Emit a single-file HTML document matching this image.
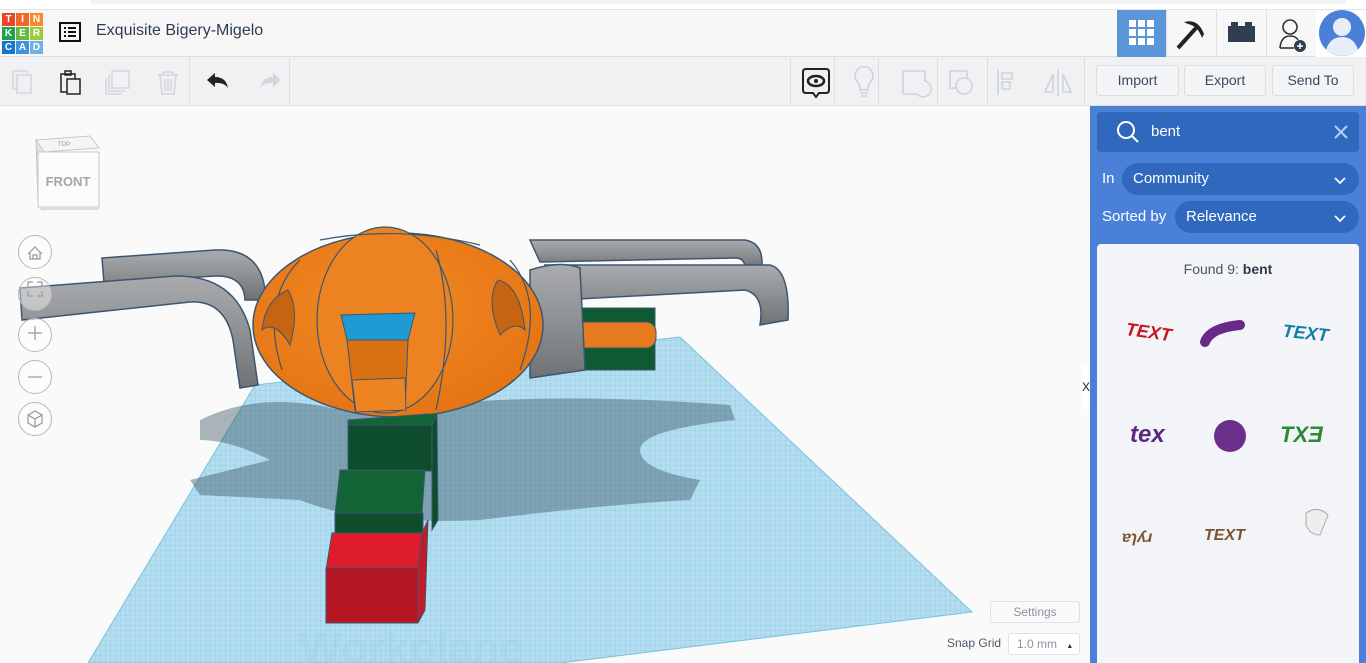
<!DOCTYPE html>
<html><head><meta charset="utf-8"><style>
*{margin:0;padding:0;box-sizing:border-box}
body{width:1366px;height:663px;overflow:hidden;background:#fafafa;font-family:"Liberation Sans",sans-serif;position:relative}
.abs{position:absolute}
.top{left:0;top:0;width:1366px;height:9px;background:#fff}
.top:after{content:"";position:absolute;left:90px;right:20px;top:0;height:4px;background:#f1f2f4;border-radius:0 0 8px 8px}
.hdr{left:0;top:9px;width:1366px;height:48px;background:#f7f7f7;border-top:1px solid #e4e4e4;border-bottom:1px solid #dcdde0}
.tb{left:0;top:57px;width:1366px;height:49px;background:#f0f1f3;border-bottom:1px solid #e0e1e4}
.lg{position:absolute;width:13px;height:13px;color:#fff;font-size:10px;font-weight:bold;text-align:center;line-height:13px}
.btn{position:absolute;top:65px;height:31px;border:1px solid #dcdde0;border-radius:3px;background:#f3f4f6;color:#3a4a5c;font-size:14px;text-align:center;line-height:29px}
.sep{position:absolute;top:58px;width:1px;height:46px;background:#dcdde0}
.panel{left:1090px;top:106px;width:276px;height:557px;background:#4a80d8}
.cell{position:absolute;width:76px;height:92px;background:#f2f4f7;border-radius:4px}
.circ{position:absolute;left:18px;width:34px;height:34px;border:1px solid #b8b8b8;border-radius:50%;background:rgba(255,255,255,.4)}
</style></head><body>
<div class="abs top"></div>
<div class="abs hdr"></div>
<div class="lg" style="left:2px;top:13px;background:#e8452a">T</div><div class="lg" style="left:16px;top:13px;background:#f0682a">I</div><div class="lg" style="left:30px;top:13px;background:#f58b2a">N</div>
<div class="lg" style="left:2px;top:27px;background:#1fa24a">K</div><div class="lg" style="left:16px;top:27px;background:#69b843">E</div><div class="lg" style="left:30px;top:27px;background:#9ccc3c">R</div>
<div class="lg" style="left:2px;top:41px;background:#1677c9">C</div><div class="lg" style="left:16px;top:41px;background:#3e95dc">A</div><div class="lg" style="left:30px;top:41px;background:#6cb2e6">D</div>
<svg class="abs" style="left:59px;top:22px" width="22" height="20"><rect x="1" y="1" width="20" height="18" fill="none" stroke="#111" stroke-width="2"/><g fill="#111"><rect x="5" y="5" width="2" height="2"/><rect x="9" y="5" width="8" height="2"/><rect x="5" y="9" width="2" height="2"/><rect x="9" y="9" width="8" height="2"/><rect x="5" y="13" width="2" height="2"/><rect x="9" y="13" width="8" height="2"/></g></svg>
<div class="abs" style="left:96px;top:22px;font-size:16px;color:#2e3c4d">Exquisite Bigery-Migelo</div>
<div class="abs" style="left:1117px;top:10px;width:49px;height:47px;background:#5b96d9"></div>
<svg class="abs" style="left:1129px;top:20px" width="26" height="26"><g fill="#fff"><rect x="0" y="0" width="7" height="7"/><rect x="9" y="0" width="7" height="7"/><rect x="18" y="0" width="7" height="7"/><rect x="0" y="9" width="7" height="7"/><rect x="9" y="9" width="7" height="7"/><rect x="18" y="9" width="7" height="7"/><rect x="0" y="18" width="7" height="7"/><rect x="9" y="18" width="7" height="7"/><rect x="18" y="18" width="7" height="7"/></g></svg>
<div class="abs" style="left:1166px;top:10px;width:1px;height:47px;background:#e0e0e0"></div>
<svg class="abs" style="left:1174px;top:18px" width="34" height="32"><path d="M4 30 L22 10" stroke="#222" stroke-width="4"/><path d="M10 4 Q24 0 30 16 L28 20 Q24 8 14 6 Z" fill="#222"/></svg>
<div class="abs" style="left:1216px;top:10px;width:1px;height:47px;background:#e0e0e0"></div>
<svg class="abs" style="left:1228px;top:20px" width="28" height="24"><rect x="0" y="6" width="27" height="16" fill="#2f3e50"/><rect x="3" y="2" width="7" height="5" fill="#2f3e50"/><rect x="17" y="2" width="7" height="5" fill="#2f3e50"/></svg>
<div class="abs" style="left:1266px;top:10px;width:1px;height:47px;background:#e0e0e0"></div>
<svg class="abs" style="left:1278px;top:18px" width="34" height="36"><circle cx="12" cy="9" r="7" fill="none" stroke="#333" stroke-width="1.6"/><path d="M2 30 Q3 18 12 18 Q18 18 20 22" fill="none" stroke="#333" stroke-width="1.6"/><line x1="2" y1="30" x2="16" y2="30" stroke="#333" stroke-width="1.6"/><circle cx="22" cy="28" r="6" fill="#2f3e50"/><path d="M22 25v6M19 28h6" stroke="#fff" stroke-width="1.5"/></svg>
<div class="abs" style="left:1316px;top:10px;width:50px;height:47px;background:#fff"></div>
<svg class="abs" style="left:1318px;top:10px" width="48" height="46"><circle cx="24" cy="23" r="23" fill="#4a80d8"/><circle cx="24" cy="17" r="9" fill="#e8eef8"/><path d="M8 40 Q12 27 24 27 Q36 27 40 40 Q32 46 24 46 Q16 46 8 40Z" fill="#e8eef8"/></svg>
<div class="abs tb"></div>
<svg class="abs" style="left:10px;top:68px" width="180" height="28" fill="none" stroke-width="1.5">
<rect x="3" y="3" width="14" height="18" stroke="#d3d6db"/><rect x="7" y="7" width="14" height="18" stroke="#d3d6db" fill="#f0f1f3"/>
<rect x="51" y="6" width="14" height="18" stroke="#222"/><rect x="57" y="11" width="13" height="15" stroke="#222" fill="#f0f1f3"/><rect x="55" y="3" width="6" height="4" stroke="#222"/>
<rect x="102" y="3" width="17" height="17" stroke="#d3d6db"/><path d="M99 7v16h16M96 10v16h16" stroke="#d3d6db"/>
<path d="M148 7h20M153 7v-3h10v3M150 7l2 19h12l2-19M155 11v12M158 11v12M161 11v12" stroke="#d3d6db"/>
</svg>
<div class="sep" style="left:189px"></div>
<svg class="abs" style="left:204px;top:70px" width="80" height="22"><path d="M3 10 L11 3 V7 Q22 7 24 18 Q20 12 11 13 V17 Z" fill="#222"/><path d="M77 10 L69 3 V7 Q58 7 56 18 Q60 12 69 13 V17 Z" fill="#d3d6db"/></svg>
<div class="sep" style="left:289px"></div>
<div class="sep" style="left:790px"></div>
<svg class="abs" style="left:801px;top:67px" width="30" height="34"><path d="M5 2h20q3 0 3 3v18q0 3-3 3h-7l-3 4-3-4H5q-3 0-3-3V5q0-3 3-3z" fill="none" stroke="#222" stroke-width="2"/><ellipse cx="15" cy="14" rx="8" ry="5" fill="none" stroke="#222" stroke-width="2.5"/><circle cx="15" cy="14" r="2" fill="#222"/></svg>
<div class="sep" style="left:834px"></div>
<svg class="abs" style="left:848px;top:66px" width="230" height="32" fill="none" stroke="#d0d4da" stroke-width="1.6">
<path d="M12 24 Q12 18 8 14 A9 9 0 1 1 24 14 Q20 18 20 24 Z M12 27h8M13 30h6"/>
<path d="M55 5h22v10 a8 8 0 1 1 -8 13 H55Z"/>
<rect x="102" y="5" width="17" height="17"/><circle cx="116" cy="20" r="8" fill="#f0f1f3"/>
<path d="M150 3v26M154 7h10v6h-10zM154 16h8v7h-8z"/>
<path d="M210 3v27M205 8l-8 18h8zM215 8l8 18h-8z"/>
</svg>
<div class="sep" style="left:878px"></div><div class="sep" style="left:937px"></div><div class="sep" style="left:987px"></div><div class="sep" style="left:1084px"></div>
<div class="btn" style="left:1096px;width:83px">Import</div>
<div class="btn" style="left:1184px;width:82px">Export</div>
<div class="btn" style="left:1272px;width:82px">Send To</div>

<svg class="abs" style="left:0;top:106px" width="1090" height="557" viewBox="0 106 1090 557">
<defs>
<pattern id="g" width="5" height="5" patternUnits="userSpaceOnUse"><rect width="5" height="5" fill="#b4def0"/><path d="M0 0H5M0 0V5" stroke="#7fc3e0" stroke-width=".6"/></pattern>
<linearGradient id="pp" x1="0" y1="0" x2="0" y2="1"><stop offset="0" stop-color="#a9abae"/><stop offset=".5" stop-color="#8e9194"/><stop offset="1" stop-color="#6f7275"/></linearGradient>
<radialGradient id="pk" cx=".45" cy=".4" r=".6"><stop offset="0" stop-color="#f28a25"/><stop offset="1" stop-color="#e57514"/></radialGradient>
</defs>
<polygon points="255,385 680,337 972,612 560,663 88,663 180,510" fill="url(#g)" stroke="#7cc0dd"/>
<path d="M200 420 Q260 390 340 410 L500 400 Q600 395 730 405 L735 420 Q640 430 640 450 Q640 470 700 480 L690 500 Q600 505 480 520 Q360 525 300 500 L200 495 L190 480 L270 460 Q230 440 200 440Z" fill="#2f4a58" opacity=".4"/>
<path d="M102 258 L215 250 Q260 248 265 290 L265 300 L245 300 Q244 275 215 276 L104 283 Z" fill="url(#pp)" stroke="#3c5670" stroke-width="1.5"/>
<path d="M20 288 L175 276 Q235 275 250 330 L258 385 L240 388 L233 340 Q225 300 190 302 L22 320 Z" fill="url(#pp)" stroke="#3c5670" stroke-width="1.5"/>
<path d="M530 240 L745 240 Q763 243 762 265 L745 268 Q745 258 735 258 L540 262Z" fill="url(#pp)" stroke="#3c5670" stroke-width="1.5"/>
<path d="M545 265 L770 265 Q790 270 788 320 L760 325 Q765 295 745 290 L560 300Z" fill="url(#pp)" stroke="#3c5670" stroke-width="1.5"/>
<rect x="550" y="308" width="105" height="62" fill="#0f5a32" stroke="#3c5670"/>
<rect x="548" y="322" width="108" height="26" rx="10" fill="#e57a1e" stroke="#3c5670"/>
<path d="M530 270 Q560 260 580 268 L585 370 L530 378Z" fill="url(#pp)" stroke="#3c5670" stroke-width="1.5"/>
<ellipse cx="398" cy="325" rx="145" ry="92" fill="url(#pk)" stroke="#3c5670" stroke-width="1.5"/>
<ellipse cx="385" cy="320" rx="68" ry="93" fill="#ed8220" stroke="#3c5670" stroke-width="1.2"/>
<path d="M320 240 Q398 225 480 245 M300 260 Q260 300 282 370 M510 260 Q545 300 520 370 M436 250 Q456 320 436 410" fill="none" stroke="#3c5670" stroke-width="1.2"/>
<path d="M288 290 Q265 300 262 330 Q275 320 290 345 Q300 310 288 290Z" fill="#c76412" stroke="#3c5670"/>
<path d="M498 280 Q520 285 525 330 Q515 320 500 335 Q485 300 498 280Z" fill="#c76412" stroke="#3c5670"/>
<path d="M341 315 L415 313 L408 340 L347 340Z" fill="#1e9ad4" stroke="#3c5670"/>
<path d="M347 340 L408 340 L405 410 L355 410Z" fill="#d77113" stroke="#3c5670"/>
<path d="M352 380 L405 378 L406 410 L356 412Z" fill="#ee8420" stroke="#3c5670"/>
<rect x="348" y="425" width="84" height="46" fill="#0e4d2c" stroke="#3c5670"/>
<polygon points="348,420 428,414 437,414 432,425 348,425" fill="#126436" stroke="#3c5670"/>
<polygon points="432,425 437,414 438,520 432,530" fill="#0e4d2c" stroke="#3c5670"/>
<polygon points="340,470 425,470 422,513 335,515" fill="#126436" stroke="#3c5670"/>
<rect x="335" y="513" width="88" height="24" fill="#0e4d2c" stroke="#3c5670"/>
<polygon points="326,570 332,533 422,533 418,568" fill="#de1c2c" stroke="#3c5670"/>
<rect x="326" y="568" width="92" height="55" fill="#b51624" stroke="#3c5670"/>
<polygon points="418,568 422,533 428,520 425,610 418,623" fill="#c41a28" stroke="#3c5670"/>
<text x="300" y="663" font-size="44" font-weight="bold" fill="#9fcfe3" opacity=".35">Workplane</text>
</svg>
<svg class="abs" style="left:32px;top:132px" width="70" height="82"><polygon points="4,8 58,4 67,16 12,20" fill="#f4f4f4" stroke="#c8c8c8"/><polygon points="4,8 12,20 12,78 6,70" fill="#e4e4e4" stroke="#c8c8c8"/><rect x="6" y="20" width="61" height="55" fill="#fbfbfb" stroke="#c8c8c8"/><rect x="8" y="75" width="59" height="3" fill="#ddd"/><text x="36" y="54" font-size="13" font-weight="bold" fill="#a3a6aa" text-anchor="middle">FRONT</text><text x="32" y="14" font-size="6" fill="#999" text-anchor="middle">TOP</text></svg>
<div class="circ" style="top:235px"></div><div class="circ" style="top:277px"></div><div class="circ" style="top:318px"></div><div class="circ" style="top:360px"></div><div class="circ" style="top:402px"></div>
<svg class="abs" style="left:18px;top:235px" width="34" height="200" fill="none" stroke="#999" stroke-width="1.2"><path d="M10 19l7-7 7 7M12 17v7h10v-7M15 24v-4h4v4"/><path d="M10 52v-5h5M19 47h5v5M24 56v5h-5M15 61h-5v-5"/><path d="M17 91v14M10 98h14"/><path d="M10 142h14"/><path d="M17 176l7 4v8l-7 4-7-4v-8zM10 180l7 4 7-4M17 184v8"/></svg>
<div class="abs" style="left:990px;top:601px;width:90px;height:22px;border:1px solid #e0e0e4;border-radius:3px;background:#fafafa;color:#8a94a0;font-size:12px;text-align:center;line-height:20px">Settings</div>
<div class="abs" style="left:947px;top:636px;font-size:12px;color:#4a5868">Snap Grid</div>
<div class="abs" style="left:1008px;top:633px;width:72px;height:22px;border:1px solid #e0e0e4;border-radius:3px;background:#fff;color:#8a94a0;font-size:12px;line-height:20px;padding-left:8px">1.0 mm <span style="font-size:7px;color:#333;margin-left:6px">▲</span></div>
<div class="abs" style="left:1082px;top:365px;width:8px;height:44px;background:#fff;border-radius:4px 0 0 4px;font-size:12px;line-height:44px;color:#222">X</div>
<div class="abs panel"></div>
<div class="abs" style="left:1097px;top:112px;width:262px;height:40px;background:#2f68bd;border-radius:4px"></div>
<svg class="abs" style="left:1115px;top:119px" width="26" height="26"><circle cx="11" cy="11" r="8" fill="none" stroke="#fff" stroke-width="2"/><path d="M17 17l6 6" stroke="#fff" stroke-width="2"/></svg>
<div class="abs" style="left:1151px;top:123px;font-size:15px;color:#fff">bent</div>
<svg class="abs" style="left:1334px;top:125px" width="14" height="14"><path d="M1 1l12 12M13 1L1 13" stroke="#b8cdf0" stroke-width="2"/></svg>
<div class="abs" style="left:1102px;top:170px;font-size:15px;color:#fff">In</div>
<div class="abs" style="left:1122px;top:163px;width:237px;height:32px;background:#2f68bd;border-radius:16px;color:#fff;font-size:15px;line-height:32px;padding-left:11px">Community</div>
<div class="abs" style="left:1102px;top:208px;font-size:15px;color:#fff">Sorted by</div>
<div class="abs" style="left:1175px;top:201px;width:184px;height:32px;background:#2f68bd;border-radius:16px;color:#fff;font-size:15px;line-height:32px;padding-left:11px">Relevance</div>
<svg class="abs" style="left:1333px;top:175px" width="14" height="50"><path d="M2 3l5 5 5-5M2 41l5 5 5-5" fill="none" stroke="#fff" stroke-width="1.8"/></svg>
<div class="abs" style="left:1097px;top:244px;width:262px;height:419px;background:#f3f5f8;border-radius:4px 4px 0 0"></div>
<div class="abs" style="left:1097px;top:261px;width:262px;text-align:center;font-size:14px;color:#4a5564">Found 9: <b style="color:#2e3a48">bent</b></div>
<div class="cell" style="left:1110px;top:290px"></div><div class="cell" style="left:1190px;top:290px"></div><div class="cell" style="left:1271px;top:290px"></div>
<div class="cell" style="left:1110px;top:389px"></div><div class="cell" style="left:1190px;top:389px"></div><div class="cell" style="left:1271px;top:389px"></div>
<div class="cell" style="left:1110px;top:493px"></div><div class="cell" style="left:1190px;top:493px"></div><div class="cell" style="left:1271px;top:493px"></div>
<svg class="abs" style="left:1110px;top:290px" width="240" height="300" font-weight="bold" font-style="italic" font-family="Liberation Sans">
<text x="16" y="48" font-size="18" fill="#c8141e" transform="rotate(8 38 40)">TEXT</text>
<path d="M95 52 Q100 38 130 35" stroke="#6a2a8a" stroke-width="10" fill="none" stroke-linecap="round"/>
<text x="173" y="49" font-size="18" fill="#137cae" transform="rotate(6 195 40)">TEXT</text>
<text x="20" y="152" font-size="24" fill="#5a2a7f">tex</text>
<ellipse cx="120" cy="146" rx="16" ry="16" fill="#6a2f8c"/>
<text x="170" y="152" font-size="22" fill="#2a8a3a">TXƎ</text>
<text x="12" y="252" font-size="16" fill="#7a5430">ɐɿʎɹ</text>
<text x="94" y="250" font-size="16" fill="#7a5430">TEXT</text>
<path d="M196 223 Q208 215 218 225 L210 245 Q200 245 196 235Z" fill="#eee" stroke="#aaa"/>
</svg>
</body></html>
